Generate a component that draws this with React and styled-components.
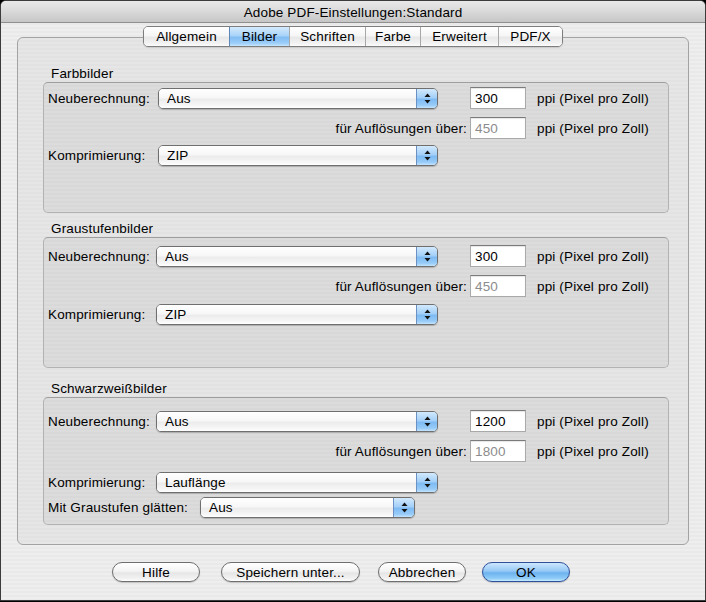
import React from "react";
import styled, { createGlobalStyle, css } from "styled-components";

const Global = createGlobalStyle`
  html, body { margin: 0; padding: 0; background: #000; }
  body { font-family: "Liberation Sans", Arial, sans-serif; font-size: 13.5px; letter-spacing: 0.15px; color: #000; }
  * { box-sizing: border-box; }
`;

const stripes = (a, b) => `repeating-linear-gradient(180deg, ${a} 0px, ${a} 2px, ${b} 2px, ${b} 4px)`;

const Window = styled.div`
  width: 706px;
  height: 601px;
  border: 1px solid #3c3c3c;
  border-radius: 6px 6px 0 0;
  overflow: hidden;
  display: flex;
  flex-direction: column;
  background: ${stripes("#eeeeee", "#e9e9e9")};
`;

const TitleBar = styled.div`
  height: 22px;
  flex: none;
  display: flex;
  align-items: center;
  justify-content: center;
  background: linear-gradient(180deg, #e9e9e9 0%, #d9d9d9 50%, #c6c6c6 100%);
  border-bottom: 1px solid #8f8f8f;
  padding-top: 1px;
`;

const Body = styled.div`
  flex: 1;
  display: flex;
  flex-direction: column;
  padding: 3px 16px 0;
`;

const TabStrip = styled.div`
  display: flex;
  justify-content: center;
  position: relative;
  z-index: 1;
  margin-bottom: -10px;
`;

const TabGroup = styled.div`
  display: flex;
  height: 21px;
  border: 1px solid #7d7d7d;
  border-radius: 5px;
  overflow: hidden;
  box-shadow: 0 1px 1px rgba(0,0,0,0.12);
`;

const Tab = styled.div`
  height: 100%;
  width: ${p => p.$w}px;
  display: flex;
  align-items: center;
  justify-content: center;
  border-left: 1px solid #a8a8a8;
  &:first-child { border-left: none; }
  background: linear-gradient(180deg, #ffffff 0%, #f6f6f6 45%, #e8e8e8 55%, #f2f2f2 85%, #fcfcfc 100%);
  ${p => p.$active && css`
    border-left-color: #5f86b8;
    background: linear-gradient(180deg, #d5ebfd 0%, #a9d3f8 45%, #82bdf3 55%, #9ccdf8 85%, #c6e5fd 100%);
  `}
`;

const Pane = styled.div`
  height: 508px;
  border: 1px solid #a3a3a3;
  border-radius: 6px;
  background: ${stripes("#e6e6e6", "#e2e2e2")};
  padding: 28px 19px 0 25px;
  display: flex;
  flex-direction: column;
`;

const GroupTitle = styled.div`
  line-height: 16px;
  height: 16px;
  margin-left: 8px;
  margin-top: ${p => p.$mt || 0}px;
`;

const GroupBox = styled.div`
  height: ${p => p.$h}px;
  border: 1px solid #b2b2b2;
  border-top-color: #9e9e9e;
  border-radius: 5px;
  background: ${stripes("#dcdcdc", "#d8d8d8")};
  padding: 0 0 0 4px;
  display: flex;
  flex-direction: column;
`;

const Row = styled.div`
  display: grid;
  grid-template-columns: ${p => p.$lw}px ${p => p.$pw}px ${p => 422 - p.$lw - p.$pw}px 56px auto;
  align-items: center;
  height: 22px;
  margin-top: ${p => p.$mt}px;
`;

const Label = styled.span`
  white-space: nowrap;
  ${p => p.$wide && css`grid-column: 1 / span 3; text-align: right; padding-right: 3px;`}
`;

const PopupWrap = styled.div`
  height: 21px;
  width: ${p => p.$w}px;
  display: flex;
  border: 1px solid #6f6f6f;
  border-radius: 5px;
  overflow: hidden;
  box-shadow: 0 1px 1px rgba(0,0,0,0.2);
`;

const PopupText = styled.div`
  flex: 1;
  display: flex;
  align-items: center;
  padding-left: 8px;
  background: linear-gradient(180deg, #ffffff 0%, #f7f7f7 45%, #ececec 55%, #f6f6f6 85%, #ffffff 100%);
`;

const PopupArrow = styled.div`
  width: 21px;
  display: flex;
  align-items: center;
  justify-content: center;
  border-left: 1px solid #6a90c4;
  background: linear-gradient(180deg, #d2e9fd 0%, #a4d0f8 45%, #7fbbf3 55%, #96cbf8 85%, #c4e4fd 100%);
`;

const Popup = ({ value, w }) => (
  <PopupWrap $w={w}>
    <PopupText>{value}</PopupText>
    <PopupArrow>
      <svg width="7" height="11" viewBox="0 0 7 11">
        <path d="M3.5 0.5 L6.5 4 L0.5 4 Z" fill="#111" />
        <path d="M0.5 7 L6.5 7 L3.5 10.5 Z" fill="#111" />
      </svg>
    </PopupArrow>
  </PopupWrap>
);

const Field = styled.div`
  grid-column: 4;
  height: 22px;
  width: 56px;
  background: #fff;
  border: 1px solid #a9a9a9;
  border-top-color: #7b7b7b;
  box-shadow: inset 0 1px 1px rgba(0,0,0,0.1);
  display: flex;
  align-items: center;
  padding-left: 4px;
  color: ${p => (p.$disabled ? "#8c8c8c" : "#000")};
`;

const Unit = styled.span`
  grid-column: 5;
  padding-left: 11px;
  white-space: nowrap;
`;

const ButtonBar = styled.div`
  display: flex;
  align-items: center;
  margin-top: 17px;
  padding-left: 95px;
`;

const Button = styled.div`
  height: 20px;
  width: ${p => p.$w}px;
  margin-right: ${p => p.$mr || 0}px;
  border-radius: 10px;
  border: 1px solid ${p => (p.$default ? "#2f4f9a" : "#6e6e6e")};
  display: flex;
  align-items: center;
  justify-content: center;
  box-shadow: 0 1px 1px rgba(0,0,0,0.18);
  background: ${p =>
    p.$default
      ? "linear-gradient(180deg, #cde7fd 0%, #95c8f6 45%, #6db2f0 55%, #8ecbf7 85%, #c6ecfe 100%)"
      : "linear-gradient(180deg, #ffffff 0%, #f4f4f4 45%, #e6e6e6 55%, #f1f1f1 85%, #ffffff 100%)"};
`;

const ResolutionRows = ({ lw, ppi, over, mt }) => (
  <>
    <Row $lw={lw} $pw={390 - lw} $mt={mt}>
      <Label>Neuberechnung:</Label>
      <Popup value="Aus" w={390 - lw} />
      <span />
      <Field>{ppi}</Field>
      <Unit>ppi (Pixel pro Zoll)</Unit>
    </Row>
    <Row $lw={lw} $pw={390 - lw} $mt={8}>
      <Label $wide>für Auflösungen über:</Label>
      <Field $disabled>{over}</Field>
      <Unit>ppi (Pixel pro Zoll)</Unit>
    </Row>
  </>
);

export default function App() {
  return (
    <>
      <Global />
      <Window>
        <TitleBar>Adobe PDF-Einstellungen:Standard</TitleBar>
        <Body>
          <TabStrip>
            <TabGroup>
              <Tab $w={85}>Allgemein</Tab>
              <Tab $w={60} $active>Bilder</Tab>
              <Tab $w={76}>Schriften</Tab>
              <Tab $w={55}>Farbe</Tab>
              <Tab $w={78}>Erweitert</Tab>
              <Tab $w={64}>PDF/X</Tab>
            </TabGroup>
          </TabStrip>
          <Pane>
            <GroupTitle>Farbbilder</GroupTitle>
            <GroupBox $h={131}>
              <ResolutionRows lw={110} ppi="300" over="450" mt={4} />
              <Row $lw={110} $pw={280} $mt={5}>
                <Label>Komprimierung:</Label>
                <Popup value="ZIP" w={280} />
              </Row>
            </GroupBox>

            <GroupTitle $mt={8}>Graustufenbilder</GroupTitle>
            <GroupBox $h={131}>
              <ResolutionRows lw={108} ppi="300" over="450" mt={7} />
              <Row $lw={108} $pw={282} $mt={6}>
                <Label>Komprimierung:</Label>
                <Popup value="ZIP" w={282} />
              </Row>
            </GroupBox>

            <GroupTitle $mt={13}>Schwarzweißbilder</GroupTitle>
            <GroupBox $h={128}>
              <ResolutionRows lw={108} ppi="1200" over="1800" mt={12} />
              <Row $lw={108} $pw={282} $mt={9}>
                <Label>Komprimierung:</Label>
                <Popup value="Lauflänge" w={282} />
              </Row>
              <Row $lw={152} $pw={215} $mt={3}>
                <Label>Mit Graustufen glätten:</Label>
                <Popup value="Aus" w={215} />
              </Row>
            </GroupBox>
          </Pane>
          <ButtonBar>
            <Button $w={88} $mr={21}>Hilfe</Button>
            <Button $w={139} $mr={18}>Speichern unter...</Button>
            <Button $w={88} $mr={16}>Abbrechen</Button>
            <Button $w={88} $default>OK</Button>
          </ButtonBar>
        </Body>
      </Window>
    </>
  );
}
